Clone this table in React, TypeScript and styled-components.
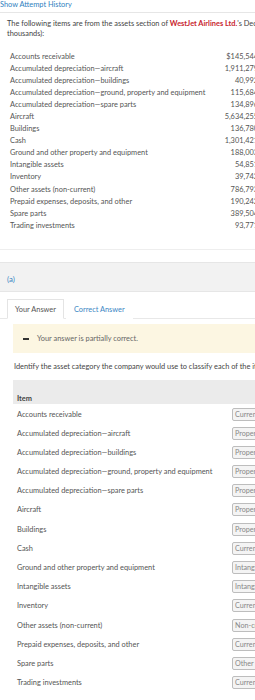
import React from 'react';
import styled, { createGlobalStyle } from 'styled-components';

const GlobalStyle = createGlobalStyle`
  html, body {
    margin: 0;
    padding: 0;
    background: #ffffff;
    overflow: hidden;
  }
  body {
    font-family: Lato, "Open Sans", Arial, sans-serif;
    color: #555555;
  }
`;

const Page = styled.div`
  width: 265px;
  font-size: 7.4px;
`;

const HistoryLink = styled.a`
  display: block;
  color: #2f7fc0;
  font-size: 7.4px;
  line-height: 10px;
  padding: 0 0 2px 0;
  text-decoration: none;
  border-bottom: 1px solid #e6e6e6;
  width: 300px;
`;

const Question = styled.div`
  padding: 6px 7px 0;
`;

const Lead = styled.p`
  margin: 0;
  white-space: nowrap;
  line-height: 10px;
  color: #444;
`;

const Company = styled.strong`
  color: #c8252d;
  font-weight: 700;
`;

const ValueTable = styled.div`
  margin-top: 11px;
  padding-left: 3px;
  display: flex;
  flex-direction: column;
`;

const ValueRow = styled.div`
  display: flex;
  justify-content: space-between;
  align-items: center;
  height: 12.1px;
  white-space: nowrap;
`;

const Amount = styled.span`
  font-variant-numeric: tabular-nums;
`;

const Rule = styled.div`
  margin-top: 18px;
  border-top: 1px solid #eeeeee;
  width: 300px;
`;

const PartBand = styled.div`
  margin-top: 12px;
  height: 30px;
  background: #f2f2f2;
  border-top: 1px solid #e6e6e6;
  border-bottom: 1px solid #e6e6e6;
  display: flex;
  align-items: center;
  padding-left: 7px;
  padding-top: 4px;
  box-sizing: border-box;
  color: #3a86c4;
  font-size: 7.8px;
  width: 300px;
`;

const Tabs = styled.div`
  margin-top: 7px;
  padding-left: 7px;
  display: flex;
  align-items: flex-end;
  border-bottom: 1px solid #e8e8e8;
  width: 300px;
`;

const Tab = styled.div<{ $active?: boolean }>`
  height: 20px;
  display: flex;
  align-items: center;
  padding: 0 7px;
  box-sizing: border-box;
  margin-bottom: -1px;
  background: #ffffff;
  border: 1px solid ${p => (p.$active ? '#e4e4e4' : 'transparent')};
  border-bottom-color: ${p => (p.$active ? '#ffffff' : 'transparent')};
  color: ${p => (p.$active ? '#555555' : '#3a86c4')};
  margin-right: 2px;
`;

const Content = styled.div`
  padding: 5px 0 0 13px;
`;

const Banner = styled.div`
  height: 29px;
  background: #fcf6e2;
  display: flex;
  align-items: center;
  padding-left: 10px;
  gap: 8px;
  width: 300px;
  color: #666;
`;

const Dash = styled.span`
  display: inline-block;
  width: 6px;
  height: 2px;
  background: #333;
`;

const Prompt = styled.p`
  margin: 9px 0 0 1px;
  white-space: nowrap;
  color: #444;
  line-height: 10px;
`;

const AnswerTable = styled.div`
  margin-top: 8px;
  width: 300px;
`;

const HeadRow = styled.div`
  height: 24px;
  background: #ebebeb;
  display: flex;
  align-items: flex-end;
  padding: 0 0 1px 4px;
  box-sizing: border-box;
  font-weight: 700;
  color: #444;
`;

const AnswerRow = styled.div`
  height: 19.2px;
  display: flex;
  align-items: center;
  padding-left: 4px;
  white-space: nowrap;
`;

const Label = styled.span`
  width: 215px;
  flex: none;
`;

const Select = styled.div`
  height: 13px;
  width: 80px;
  box-sizing: border-box;
  background: #f4f4f4;
  border: 1px solid #bdbdbd;
  border-radius: 2px;
  font-size: 7.2px;
  color: #888;
  display: flex;
  align-items: center;
  padding-left: 2px;
  overflow: hidden;
`;

const assets: [string, string][] = [
  ['Accounts receivable', '$145,544'],
  ['Accumulated depreciation—aircraft', '1,911,279'],
  ['Accumulated depreciation—buildings', '40,992'],
  ['Accumulated depreciation—ground, property and equipment', '115,684'],
  ['Accumulated depreciation—spare parts', '134,896'],
  ['Aircraft', '5,634,255'],
  ['Buildings', '136,780'],
  ['Cash', '1,301,421'],
  ['Ground and other property and equipment', '188,003'],
  ['Intangible assets', '54,851'],
  ['Inventory', '39,742'],
  ['Other assets (non-current)', '786,793'],
  ['Prepaid expenses, deposits, and other', '190,242'],
  ['Spare parts', '389,504'],
  ['Trading investments', '93,771'],
];

const CURRENT = 'Current assets';
const PPE = 'Property, plant, and equipment';
const INTANGIBLE = 'Intangible assets';

const chosen = [
  CURRENT, PPE, PPE, PPE, PPE, PPE, PPE, CURRENT,
  INTANGIBLE, INTANGIBLE, CURRENT, 'Non-current assets', CURRENT, 'Other assets', CURRENT,
];

export default function App() {
  return (
    <>
      <GlobalStyle />
      <Page>
        <HistoryLink>Show Attempt History</HistoryLink>
        <Question>
          <Lead>
            The following items are from the assets section of <Company>WestJet Airlines Ltd.</Company>'s December 31 balance sheet (in
          </Lead>
          <Lead>thousands):</Lead>
          <ValueTable>
            {assets.map(([name, value]) => (
              <ValueRow key={name}>
                <span>{name}</span>
                <Amount>{value}</Amount>
              </ValueRow>
            ))}
          </ValueTable>
        </Question>
        <Rule />
        <PartBand>(a)</PartBand>
        <Tabs>
          <Tab $active>Your Answer</Tab>
          <Tab>Correct Answer</Tab>
        </Tabs>
        <Content>
          <Banner>
            <Dash />
            Your answer is partially correct.
          </Banner>
          <Prompt>
            Identify the asset category the company would use to classify each of the items.
          </Prompt>
          <AnswerTable>
            <HeadRow>Item</HeadRow>
            {assets.map(([name], i) => (
              <AnswerRow key={name}>
                <Label>{name}</Label>
                <Select>{chosen[i]}</Select>
              </AnswerRow>
            ))}
          </AnswerTable>
        </Content>
      </Page>
    </>
  );
}
